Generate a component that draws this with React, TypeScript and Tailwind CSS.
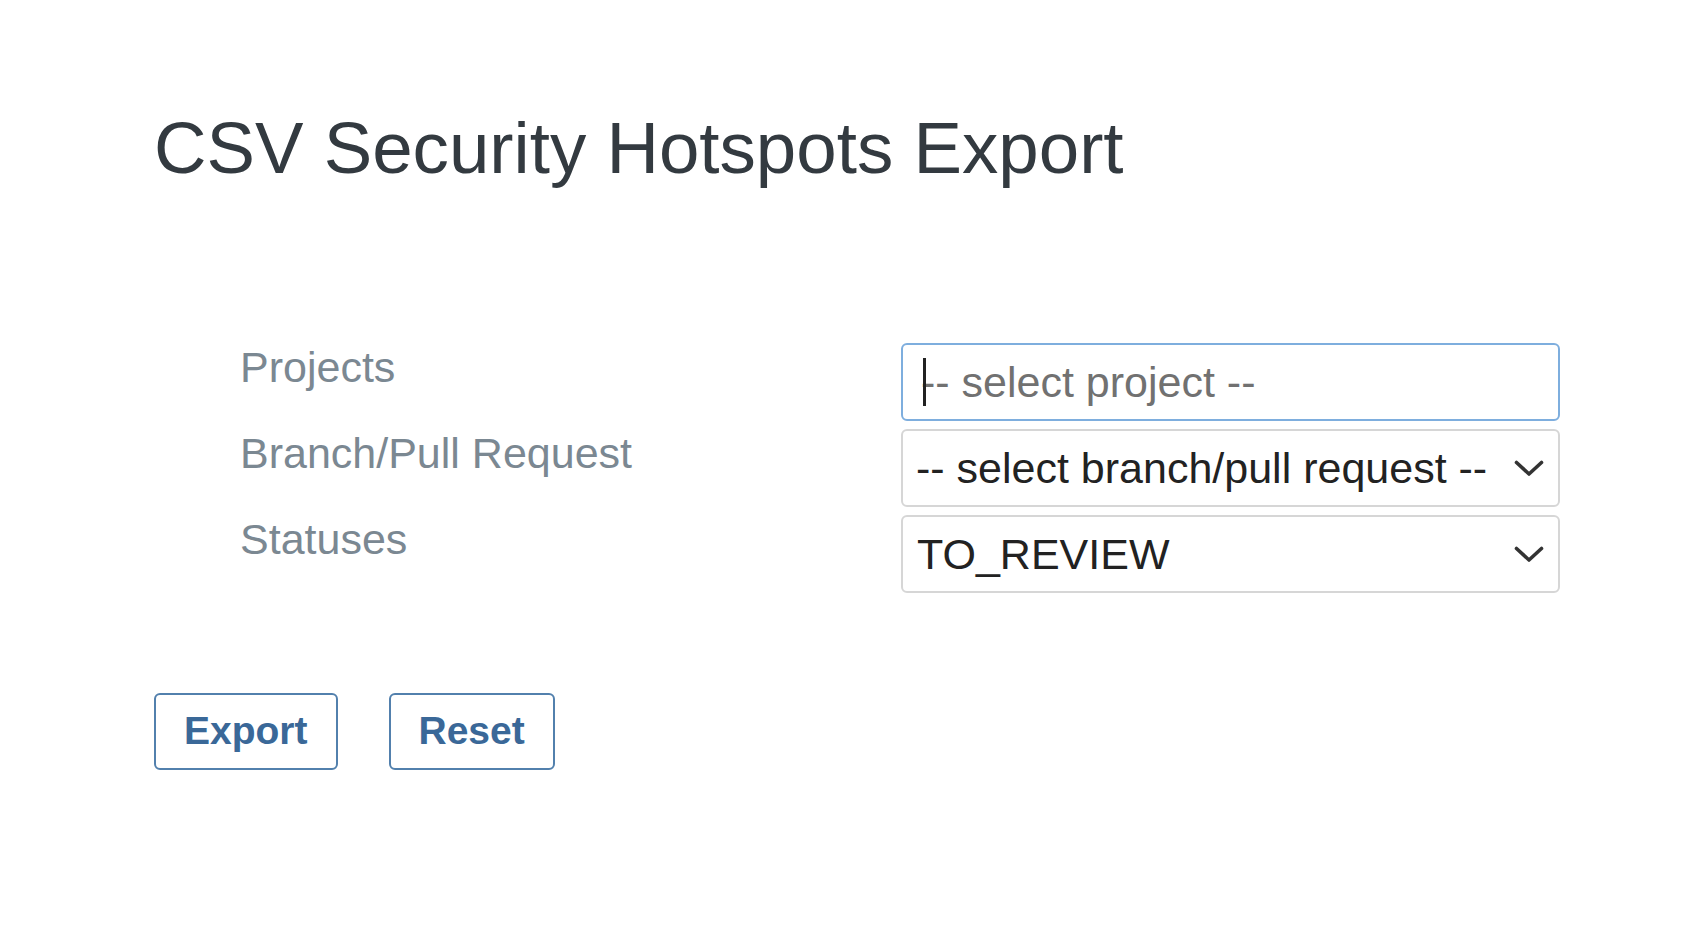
import React from 'react';

const font = { fontFamily: '"Liberation Sans", Arial, sans-serif' };

// chevron used by the two select boxes
const Chevron = () => (
  <svg width="30" height="17" viewBox="0 0 30 17" fill="none" className="shrink-0">
    <path d="M2.5 2.5 L15 14 L27.5 2.5" stroke="#333" strokeWidth="3.6" strokeLinecap="round" strokeLinejoin="round" />
  </svg>
);

interface RowProps {
  label: string;
  children: React.ReactNode;
}

const Row: React.FC<RowProps> = ({ label, children }) => (
  <div className="flex items-start">
    <div className="w-[661px] text-[43px] leading-[48px] text-[#7b8892]">{label}</div>
    {children}
  </div>
);

const App: React.FC = () => {
  return (
    <div className="min-h-[934px] bg-white pl-[154px] pt-[108px]" style={font}>
      <h1 className="text-[72.7px] leading-[80px] font-normal text-[#333a40]">CSV Security Hotspots Export</h1>

      <div className="mt-[155px] ml-[86px] flex flex-col gap-2">
        <Row label="Projects">
          {/* focused search input, caret sits over the first dash */}
          <div className="w-[659px] h-[78px] flex items-center rounded-[6px] border-2 border-[#7eaede] pl-[18px]">
            <span className="relative text-[43px] leading-[48px] text-[#717171]">
              <span className="absolute left-[2px] top-0 w-[3px] h-[48px] bg-[#222]"></span>
              -- select project --
            </span>
          </div>
        </Row>
        <Row label="Branch/Pull Request">
          <div className="w-[659px] h-[78px] flex items-center justify-between rounded-[6px] border-2 border-[#d6d6d6] pl-[13px] pr-[14px]">
            <span className="text-[43px] leading-[48px] text-[#222]">-- select branch/pull request --</span>
            <Chevron />
          </div>
        </Row>
        <Row label="Statuses">
          <div className="w-[659px] h-[78px] flex items-center justify-between rounded-[6px] border-2 border-[#d6d6d6] pl-[14px] pr-[14px]">
            <span className="text-[43px] leading-[48px] text-[#222]">TO_REVIEW</span>
            <Chevron />
          </div>
        </Row>
      </div>

      <div className="mt-[100px] flex gap-[51px]">
        <button className="h-[77px] px-[28px] rounded-[6px] border-2 border-[#5280ad] bg-white text-[39px] font-bold text-[#3a6898]">
          Export
        </button>
        <button className="h-[77px] px-[28px] rounded-[6px] border-2 border-[#5280ad] bg-white text-[39px] font-bold text-[#3a6898]">
          Reset
        </button>
      </div>
    </div>
  );
};

export default App;
